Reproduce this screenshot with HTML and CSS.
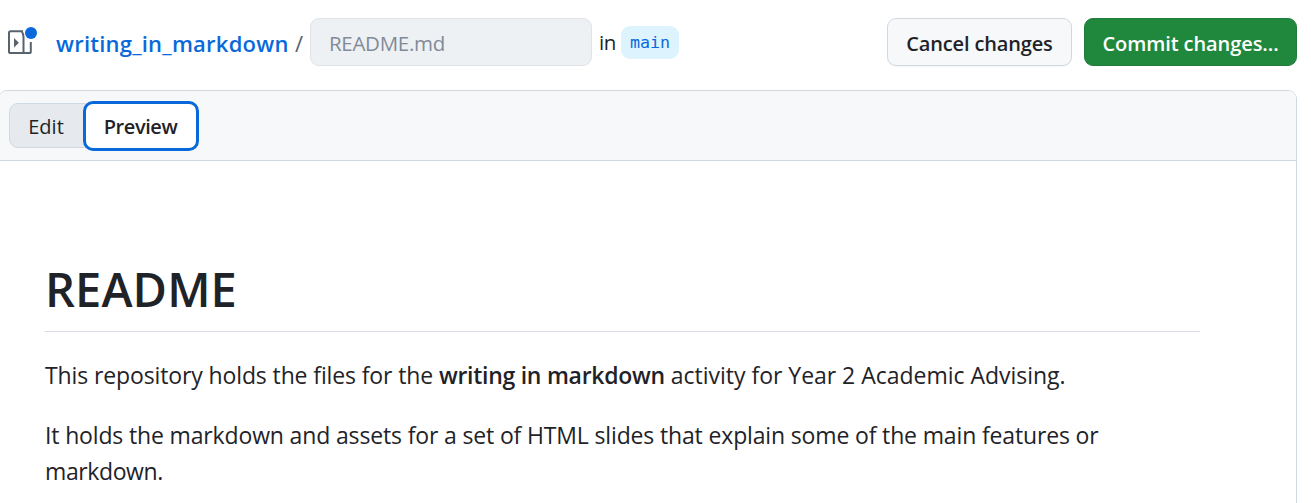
FILE: index.html
```html
<!DOCTYPE html>
<html lang="en">
<head>
<meta charset="utf-8">
<title>Editing README.md</title>
<link rel="stylesheet" href="styles.css">
</head>
<body>
<header class="topbar">
  <svg class="tree-icon" width="32" height="30" viewBox="0 0 32 30">
    <path class="frame" d="M16 4.2H3.6Q2 4.2 2 5.8V24.4Q2 26 3.6 26H22.3Q23.8 26 23.8 24.4V15M14.8 4.5Q16.5 7 16.5 10V26"/>
    <path class="arrow" d="M7 11V20.4L11.9 15.7Z"/>
    <circle class="dot" cx="24" cy="6" r="6"/>
  </svg>
  <a class="repo"><span>writing_in_markdown</span></a>
  <span class="slash">/</span>
  <div class="filename"><span>README.md</span></div>
  <span class="in">in</span>
  <a class="branch"><span>main</span></a>
  <div class="actions">
    <button class="btn cancel"><span>Cancel changes</span></button>
    <button class="btn commit"><span>Commit changes...</span></button>
  </div>
</header>
<main class="editor">
  <div class="toolbar">
    <div class="tabs">
      <button class="tab edit"><span>Edit</span></button>
      <button class="tab preview"><span>Preview</span></button>
    </div>
  </div>
  <article class="markdown">
    <h1><span>README</span></h1>
    <p><span class="p1">This repository holds the files for the </span><strong>writing in markdown</strong><span class="p3"> activity for Year 2 Academic Advising.</span></p>
    <p><span class="p2">It holds the markdown and assets for a set of HTML slides that explain some of the main features or</span><br><span class="p4">markdown.</span></p>
  </article>
</main>
</body>
</html>
```
FILE: styles.css
```css
* { box-sizing: border-box; }
body { margin: 0; width: 1311px; height: 503px; overflow: hidden; background: #fff; color: #1f2328; font-family: "Open Sans", "Noto Sans", sans-serif; font-size: 22px; }
button { font: inherit; color: inherit; padding: 0; white-space: nowrap; }
.topbar { display: flex; align-items: center; height: 90px; padding: 0 14px 6px 7px; white-space: nowrap; }
.tree-icon { flex: none; }
.frame { fill: none; stroke: #59636e; stroke-width: 2; }
.arrow { fill: #59636e; }
.dot { fill: #0969da; }
.repo { width: 232px; margin-left: 17px; padding-top: 2px; color: #0969da; font-weight: 600; letter-spacing: .23px; }
.slash { width: 9px; margin-left: 7px; padding-top: 2px; color: #59636e; }
.filename { width: 282px; height: 48px; margin-left: 6px; padding-left: 18px; line-height: 49px; border: 1px solid #e0e4e8; border-radius: 9px; background: #eef1f4; color: #818b98; font-size: 20.5px; letter-spacing: -.3px; }
.in { width: 16px; margin-left: 7px; font-size: 20.5px; letter-spacing: -.5px; }
.branch { width: 58px; height: 33px; margin-left: 6px; border-radius: 9px; background: #ddf4ff; color: #0969da; font: 16.7px/33px "DejaVu Sans Mono", monospace; text-align: center; }
.actions { display: flex; gap: 12px; margin-left: auto; }
.btn { height: 48px; padding-top: 2px; border: 1px solid #d1d9e0; border-radius: 9px; font-weight: 600; font-size: 20px; }
.cancel { width: 185px; background: #f6f8fa; box-shadow: 0 1px 0 #1f23280a; letter-spacing: -.15px; }
.commit { width: 213px; background: #1f883d; border-color: #1f7c3a; color: #fff; letter-spacing: -.08px; }
.editor { width: 1299px; height: 430px; margin-left: -2px; border: 1px solid #d1d9e0; border-radius: 9px 9px 0 0; }
.toolbar { display: flex; align-items: center; height: 70px; padding-left: 10px; border-bottom: 1px solid #d1d9e0; border-radius: 8px 8px 0 0; background: #f6f8fa; }
.tabs { display: flex; align-items: center; }
.tab { font-size: 20px; }
.edit { width: 84px; height: 45px; padding: 1px 10px 0 0; margin-right: -10px; border: 1px solid #d1d9e0; border-radius: 9px; background: #e6eaef; }
.preview { width: 116px; height: 50px; padding: 1px 1px 0 0; border: 3px solid #0969da; border-radius: 10px; background: #fff; font-weight: 600; letter-spacing: -.4px; }
.markdown { width: 1155px; margin: 91px 0 0 46px; white-space: nowrap; }
h1 { height: 80px; margin: 0 0 25px; border-bottom: 1px solid #d9dee4; font-size: 47px; line-height: 74px; font-weight: 600; letter-spacing: .1px; }
p { margin: 0 0 24px; font-size: 23px; line-height: 36px; }
strong { font-weight: 600; letter-spacing: -.27px; }
.p1 { letter-spacing: -.12px; }
.p2 { letter-spacing: -.15px; }
.p3 { letter-spacing: -.02px; }
.p4 { letter-spacing: -.4px; }
```
